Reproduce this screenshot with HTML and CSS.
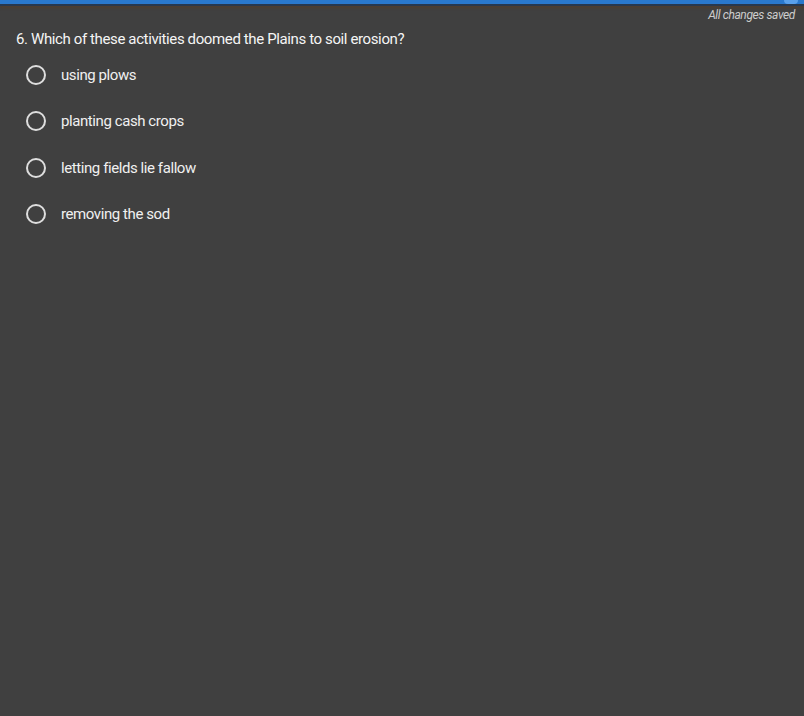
FILE: index.html
```html
<!DOCTYPE html>
<html lang="en">
  <head>
    <meta charset="UTF-8">
    <meta name="viewport" content="width=device-width, initial-scale=1.0">
    <title>Quiz</title>
    <link rel="stylesheet" href="styles.css">
  </head>
  <body>
    <div class="topBar"><span class="topBarKnob"></span></div>

    <section class="quizContainer">
      <p class="saveStatus">All changes saved</p>

      <h2 class="question">6. Which of these activities doomed the Plains to soil erosion?</h2>

      <div class="optionsList">
        <label class="option">
          <span class="radio"></span>
          <span class="optionText">using plows</span>
        </label>
        <label class="option">
          <span class="radio"></span>
          <span class="optionText">planting cash crops</span>
        </label>
        <label class="option">
          <span class="radio"></span>
          <span class="optionText">letting fields lie fallow</span>
        </label>
        <label class="option">
          <span class="radio"></span>
          <span class="optionText">removing the sod</span>
        </label>
      </div>
    </section>
  </body>
</html>
```

FILE: styles.css
```css
body {
  margin: 0px;
  font-family: Roboto, Arial, sans-serif;
  background-color: rgb(64, 64, 64);
  color: white;
  min-height: 716px;
}

.topBar {
  position: relative;
  height: 4px;
  background-color: rgb(42, 120, 205);
  border-bottom: 2px solid rgb(40, 56, 78);
  box-shadow: 0px 2px 3px rgba(80, 60, 45, 0.8);
}

.topBarKnob {
  position: absolute;
  right: 6px;
  top: 0px;
  width: 14px;
  height: 4px;
  border-radius: 0px 0px 7px 7px;
  background-color: rgb(90, 160, 235);
}

.quizContainer {
  display: flex;
  flex-direction: column;
  padding: 0px 9px 0px 16px;
}

.saveStatus {
  align-self: flex-end;
  margin: 0px;
  margin-top: 2px;
  font-size: 12px;
  letter-spacing: -0.4px;
  font-style: italic;
  color: rgb(205, 205, 205);
}

.question {
  font-size: 15px;
  letter-spacing: -0.38px;
  font-weight: normal;
  margin: 0px;
  margin-top: 8px;
  color: rgb(245, 245, 245);
}

.optionsList {
  display: flex;
  flex-direction: column;
  gap: 26.4px;
  margin-top: 17px;
  padding-left: 10px;
}

.option {
  display: flex;
  align-items: center;
  height: 20px;
  cursor: pointer;
}

.radio {
  width: 16px;
  height: 16px;
  border: 2px solid rgb(222, 222, 222);
  border-radius: 50%;
  margin-right: 15px;
}

.optionText {
  font-size: 15px;
  letter-spacing: -0.42px;
  color: rgb(240, 240, 240);
}
```
